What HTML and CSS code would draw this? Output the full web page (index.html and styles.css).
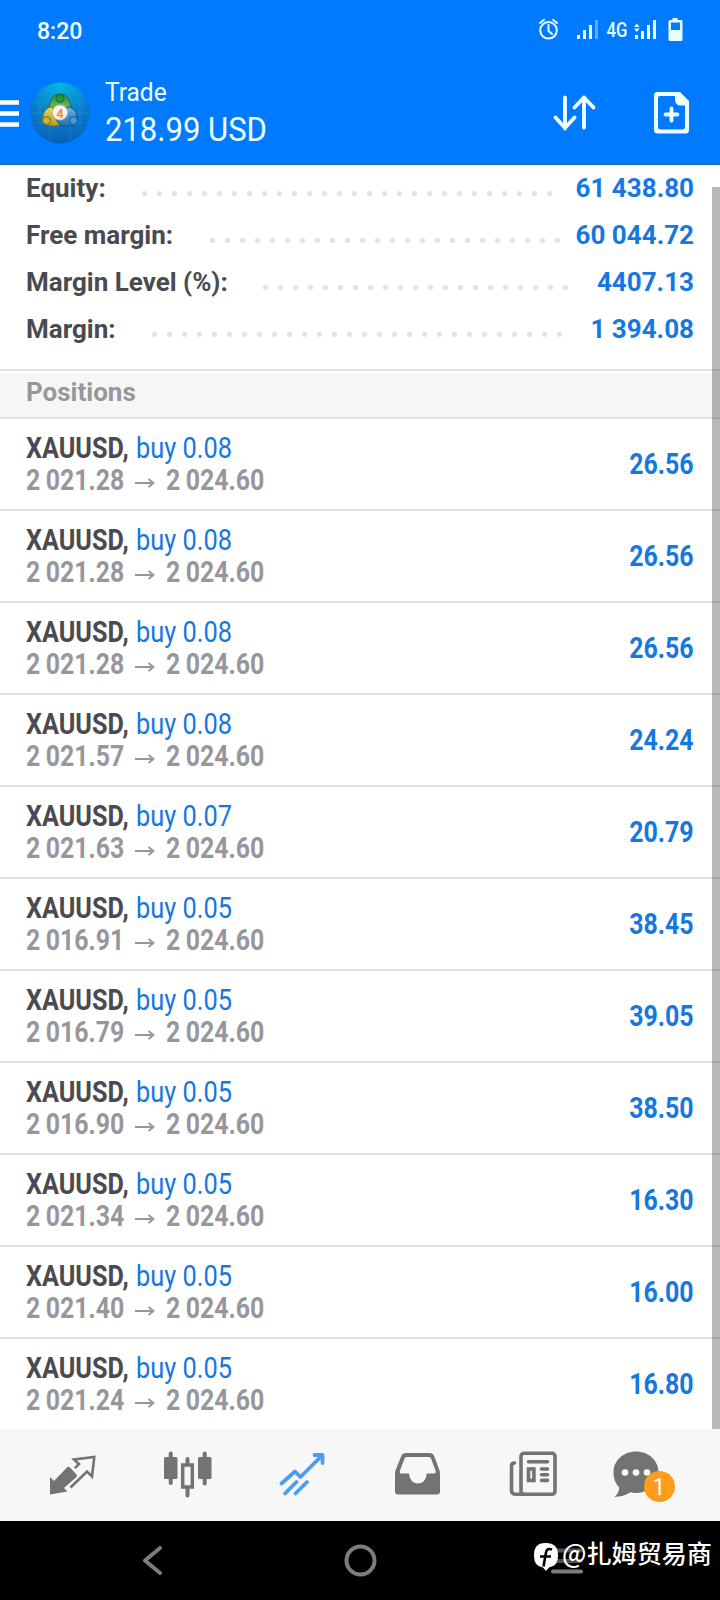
FILE: index.html
```
<!DOCTYPE html>
<html lang="en">
<head>
<meta charset="utf-8">
<title>Trade</title>
<link rel="stylesheet" href="styles.css">
</head>
<body>
<div class="phone">
  <header class="top">
    <div class="status">
      <span class="clock">8:20</span>
      <svg class="status-icons" width="150" height="30" viewBox="536 15 150 30">
        <g fill="none" stroke="#e8ffff" stroke-width="2" stroke-linecap="round">
          <circle cx="548.5" cy="30.3" r="8.3"/><path d="M548.5 25v6l3.5 3M540 23l4-3.200M557 23l-4-3.200"/>
        </g>
        <g fill="#e8ffff">
          <path d="M577 35h3v4h-3zM583 30h3v9h-3zM589 25h3v14h-3z"/>
          <path d="M595 20h3v19h-3z" opacity=".4"/>
          <path d="M635 35h3v4h-3zM641 31h3v8h-3zM647 25h3v14h-3zM653 20h3v19h-3z"/>
          <path d="M634 27l2.800-3.500 2.800 3.500zM634 28.500l2.800 3.500 2.800-3.500z"/>
          <path fill-rule="evenodd" d="M672.500 18h5v2h3.500q1.500 0 1.500 1.500v18q0 1.500-1.500 1.500h-11q-1.500 0-1.500-1.500v-18q0-1.500 1.500-1.500h2.500zM671 22.500v7.500h9v-7.500z"/>
        </g>
        <text class="net" x="606.500" y="36.500" textLength="21" lengthAdjust="spacingAndGlyphs">4G</text>
      </svg>
    </div>
    <div class="bar">
      <svg class="menu" width="19" height="27" viewBox="0 0 19 27"><path d="M0 2.500h19M0 13.500h19M0 24.500h19" stroke="#fff" stroke-width="4.400"/></svg>
      <svg class="logo" width="60" height="62" viewBox="0 0 60 62">
        <defs>
          <radialGradient id="sky" cx=".5" cy=".05" r=".95"><stop offset="0" stop-color="#05b4e8"/><stop offset=".6" stop-color="#087ac9"/><stop offset="1" stop-color="#0761b4"/></radialGradient>
          <linearGradient id="green" x2="0" y2="1"><stop stop-color="#2e8a39"/><stop offset="1" stop-color="#7cc562"/></linearGradient>
          <linearGradient id="gold" x2="0" y2="1"><stop stop-color="#e2d95a"/><stop offset="1" stop-color="#b39a25"/></linearGradient>
          <linearGradient id="blue" x2="0" y2="1"><stop stop-color="#69b9e8"/><stop offset="1" stop-color="#1b6fb8"/></linearGradient>
        </defs>
        <ellipse cx="30" cy="31" rx="29.800" ry="30.500" fill="url(#sky)"/>
        <path d="M2 21h56M1 31h58M2 41h56M10 10v42M20 3v56M40 3v56M50 10v42" stroke="#5ad2f4" stroke-opacity=".22" stroke-width=".7"/>
        <g stroke-width="1">
          <path d="M30 12c6 0 11 6 11 16H19c0-10 5-16 11-16z" fill="url(#green)" stroke="#285f2b"/>
          <path d="M23 25c-6-1-11 5-10 13 1 5 6 6 12 6l5-1-6-9z" fill="url(#gold)" stroke="#756c21"/>
          <path d="M37 25c6-1 11 6 10 13-1 5-6 6-11 6-5 0-9-3-9-7l8-2z" fill="url(#blue)" stroke="#174f82"/>
          <circle cx="30" cy="16.500" r="4" fill="#239543" stroke="#28662b"/>
          <circle cx="16.500" cy="38.500" r="4" fill="#c9b432" stroke="#766b22"/>
          <circle cx="43.500" cy="38.500" r="4" fill="#4499d7" stroke="#1b588c"/>
          <circle cx="30" cy="30.500" r="7.500" fill="#f7f4ed" stroke="#c7c3b0"/>
        </g>
        <text class="logo-num" x="30" y="35.500" text-anchor="middle">4</text>
      </svg>
      <div class="titles"><span class="title">Trade</span><span class="balance">218.99 USD</span></div>
      <svg class="actions" width="136" height="44" viewBox="553 91 136 44">
        <path d="M565 97.500v31M555.500 117.500l9.500 10.500 9.500-10.500M584 127.500V97.500M574.500 107.500L584 97.500l9.500 10" fill="none" stroke="#f2ffff" stroke-width="3.800" stroke-linecap="round" stroke-linejoin="round"/>
        <path fill="#f2ffff" fill-rule="evenodd" d="M657 92h23l9 9v29q0 3.500-3.500 3.500h-28q-3.500 0-3.500-3.500V95.500Q654 92 657 92zM660 96q-2 0-2 2v29q0 2.500 2.500 2.500h22q2.500 0 2.500-2.500v-21.500h-4q-6 0-6-6V96z"/>
        <path d="M671.500 108.500v12M665.500 114.500h12" stroke="#f2ffff" stroke-width="3.800" stroke-linecap="round"/>
      </svg>
    </div>
  </header>

  <main class="content">
    <section class="account">
      <div class="stat equity"><span class="label">Equity:</span><i class="dots"></i><b class="amount">61 438.80</b></div>
      <div class="stat free"><span class="label">Free margin:</span><i class="dots"></i><b class="amount">60 044.72</b></div>
      <div class="stat level"><span class="label">Margin Level (%):</span><i class="dots"></i><b class="amount">4407.13</b></div>
      <div class="stat margin"><span class="label">Margin:</span><i class="dots"></i><b class="amount">1 394.08</b></div>
    </section>
    <h2 class="section">Positions</h2>
    <ul class="positions" id="positions"></ul>
    <div class="scrollbar"></div>
  </main>

  <nav class="tabs">
    <svg width="720" height="92" viewBox="0 1429 720 92">
      <g fill="#737373">
        <path d="M50 1477l4 4 13-13.500q1.500-1.500 3 0l6.500 7q1 1.500 0 2.500L64 1488l3.500 3.500-17.500 3z"/>
        <path d="M70.500 1487.500L87 1471.500l5 5 2.300-19.500-20.300 2.500 5 4.500-4.200 4.200" fill="none" stroke="#737373" stroke-width="2.600"/>
        <rect x="164" y="1457" width="13.500" height="22" rx="1.500"/><rect x="198" y="1457" width="13.500" height="22" rx="1.500"/>
        <path d="M170.700 1453.500v29.500M204.700 1453.500v30M187.500 1459v5M187.500 1488v7.500" stroke="#737373" stroke-width="4" stroke-linecap="round"/>
        <rect x="182.700" y="1465" width="9.600" height="22" fill="none" stroke="#737373" stroke-width="3.500"/>
        <path fill-rule="evenodd" d="M406 1453h24q3 0 4 2.500l5.500 15q.5 1.500.5 4v17q0 3-3 3h-39q-3 0-3-3v-17q0-2.500.5-4l6-15q1-2.500 4-2.500zM406.500 1457q-1.500 0-2 1.500l-4.500 12q-1 3 1.500 3h7.500c.5 6 4 10 9 10s8.500-4 8.500-10h7q3 0 2-3l-4.500-12q-.5-1.500-2-1.500z"/>
        <g fill="none" stroke="#737373" stroke-width="3.600" stroke-linecap="round">
          <rect x="521" y="1453.300" width="34" height="41" rx="3"/>
          <path d="M514.500 1463q-3 0-3 3v24q0 4.300 4.500 4.300h8M528.500 1461.700h19M541.500 1469h6M541.500 1474.700h6M541.500 1480.400h6"/>
          <rect x="528.500" y="1469" width="5.400" height="11.500"/>
        </g>
        <path d="M636 1451.500c12.500 0 22.500 9 22.500 20.500s-10 21-22.500 21q-3 0-5.500-.7-7 4.500-16 4.700 4.500-4 4.800-9.500c-4-4-5.800-9-5.800-15.500 0-11.500 10-20.500 22.500-20.500z"/>
      </g>
      <g fill="#f7f7f7"><circle cx="625" cy="1472.500" r="3.300"/><circle cx="636" cy="1472.500" r="3.300"/><circle cx="647" cy="1472.500" r="3.300"/></g>
      <path d="M281.500 1483.500L295 1471.500l5.500 5.500L322 1455.500M314.500 1455h8v8M285 1493.500L296.500 1482M295.500 1493.500L307 1482" fill="none" stroke="#4c9df0" stroke-width="3.800" stroke-linecap="round" stroke-linejoin="round"/>
      <circle cx="659.500" cy="1486.500" r="15.500" fill="#ff9c1b"/>
      <text class="badge" x="659" y="1494.500" text-anchor="middle">1</text>
    </svg>
  </nav>

  <footer class="system">
    <svg width="720" height="79" viewBox="0 1521 720 79">
      <g fill="none" stroke="#7d7d7d" stroke-width="4" stroke-linecap="round" stroke-linejoin="round">
        <path d="M160 1548l-15 12.500 15 12.500"/><circle cx="360.500" cy="1560.500" r="14"/>
        <path d="M553 1550.500h28M553 1561h28" stroke="#4f4f4f"/><path d="M553 1571.500h28"/>
      </g>
      <path fill="#fff" d="M545 1543h1q12 0 12 12v1q0 10-9 11.500l-3 3.500-3-3.500q-9-1-9-11.500v-1q0-12 11-12z"/>
      <path d="M552 1549.500q-5-2-6 3l-2.500 14M540 1556.500h11" fill="none" stroke="#000" stroke-width="2.600"/>
      <text class="watermark" x="562" y="1563" textLength="150" lengthAdjust="spacingAndGlyphs">@扎姆贸易商</text>
    </svg>
  </footer>
</div>
<script src="app.js"></script>
</body>
</html>
```
FILE: styles.css
```
* { box-sizing: border-box; }
body { margin: 0; background: #fff; font-family: Roboto, "Liberation Sans", sans-serif; }
svg { display: block; flex: none; }
.phone { width: 720px; height: 1600px; display: flex; flex-direction: column; overflow: hidden; }

.top { flex: none; height: 165px; background: #007aff; border-bottom: 1px solid #1a68b8; color: #f0ffff; }
.status { height: 60px; display: flex; justify-content: space-between; padding: 0 34px 0 37px; }
.clock { font-size: 24px; line-height: 62px; font-weight: 500; transform: scaleX(.96); transform-origin: left; }
.status-icons { margin-top: 15px; }
.net { font-size: 20px; font-weight: 500; fill: #e8ffff; }
.bar { height: 104px; display: flex; align-items: flex-start; padding-right: 31px; }
.menu { margin-top: 40px; }
.logo { margin: 22px 0 0 11px; }
.logo-num { font-size: 13px; font-weight: 700; fill: #f08a3c; }
.titles { display: flex; flex-direction: column; margin: 18px auto 0 15px; white-space: nowrap; }
.title { font-size: 25px; line-height: 29px; transform: scaleX(.98); transform-origin: left; }
.balance { font-size: 33px; line-height: 46px; transform: scaleX(.94); transform-origin: left; }
.actions { margin-top: 31px; }

.content { position: relative; flex: none; height: 1264px; overflow: hidden; }
.account { height: 206px; border-bottom: 2px solid #e3e3e3; padding: 0 26px; }
.stat { height: 47px; display: flex; line-height: 47px; font-size: 26px; font-weight: 700; color: #4a4a4f; white-space: nowrap; }
.label { flex: 1; }
.dots { flex: none; height: 5px; margin-top: 26px; background: radial-gradient(circle, #e3e3e3 2.2px, transparent 2.9px) 0 0 / 15px 5px; }
.amount { flex: none; text-align: right; font-weight: 700; color: #1677e0; }
.equity .dots { width: 420px; } .equity .amount { width: 137px; }
.free .dots { width: 360px; } .free .amount { width: 129px; }
.level .dots { width: 315px; } .level .amount { width: 121px; }
.margin .dots { width: 420px; } .margin .amount { width: 127px; }
.section { margin: 2px 0 0; height: 46px; padding-left: 26px; background: #f6f6f6; border-bottom: 2px solid #e3e3e3; font-size: 26px; line-height: 38px; font-weight: 700; color: #97979b; }
.positions { list-style: none; margin: 0; padding: 0; }
.position { height: 92px; border-bottom: 2px solid #e3e3e3; padding: 13px 26px 0; display: flex; justify-content: space-between; font-size: 30px; line-height: 32px; white-space: nowrap; }
.line { display: flex; height: 32px; }
.symbol { color: #4a4a4f; font-weight: 700; width: 110px; }
.side { color: #1677e0; }
.prices { color: #97979b; font-weight: 700; }
.symbol, .side, .price, .profit { transform: scaleX(.83); transform-origin: left; }
.symbol { transform: scaleX(.84); }
.side { transform: scaleX(.845); }
.price { width: 109px; word-spacing: -1px; }
.arrow { margin: 14px 11px 0 0; }
.profit { color: #1677e0; font-weight: 700; transform-origin: right; line-height: 64px; }
.scrollbar { position: absolute; right: 0; top: 22px; bottom: 0; width: 8px; background: rgba(0, 0, 0, .28); }

.tabs { flex: none; height: 92px; background: #f7f7f7; }
.badge { font-size: 23px; fill: #fff; }
.system { flex: none; height: 79px; background: #000; }
.watermark { font-family: "Noto Sans CJK SC", sans-serif; font-size: 25px; font-weight: 500; fill: #fff; }
```
FILE: app.js
```
const rows = [
  ["0.08", "2 021.28", "26.56"], ["0.08", "2 021.28", "26.56"], ["0.08", "2 021.28", "26.56"],
  ["0.08", "2 021.57", "24.24"], ["0.07", "2 021.63", "20.79"], ["0.05", "2 016.91", "38.45"],
  ["0.05", "2 016.79", "39.05"], ["0.05", "2 016.90", "38.50"], ["0.05", "2 021.34", "16.30"],
  ["0.05", "2 021.40", "16.00"], ["0.05", "2 021.24", "16.80"]
];
document.getElementById("positions").innerHTML = rows.map(([lot, open, profit]) => `
<li class="position">
  <div>
    <div class="line"><span class="symbol">XAUUSD,</span><span class="side">buy ${lot}</span></div>
    <div class="line prices"><span class="price">${open}</span>
      <svg class="arrow" width="20" height="10" viewBox="0 0 20 10"><path d="M0 5h18M13.500 1l5 4-5 4" fill="none" stroke="#97979b" stroke-width="1.900"/></svg>
      <span class="price">2 024.60</span></div>
  </div>
  <span class="profit">${profit}</span>
</li>`).join("");
```
